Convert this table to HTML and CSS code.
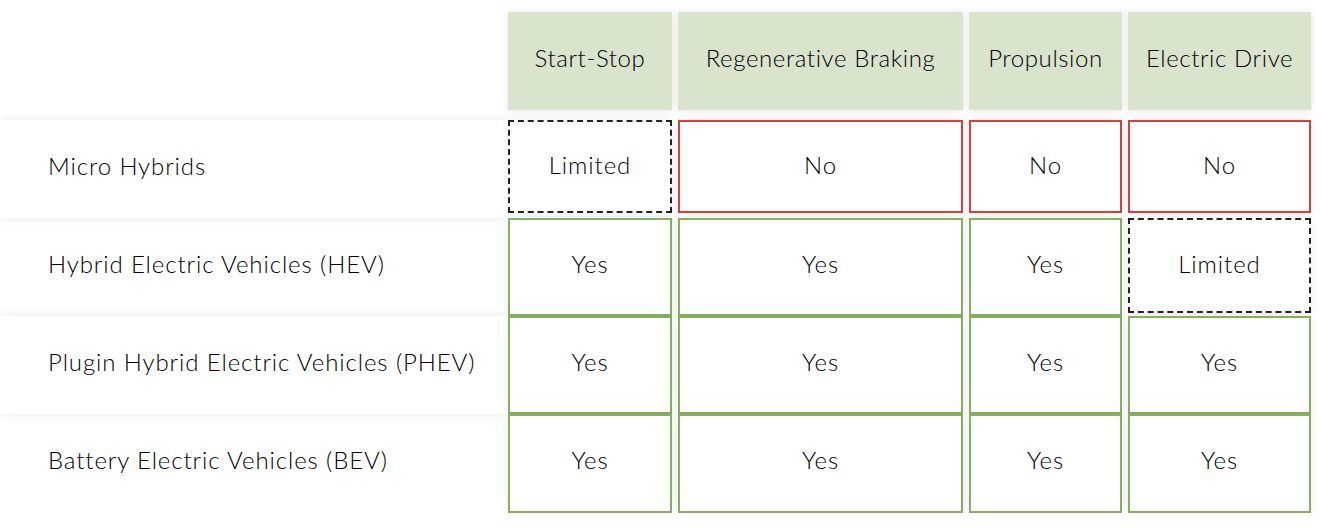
FILE: index.html
```html
<!DOCTYPE html>
<html>
<head>
<meta charset="utf-8">
<link rel="stylesheet" href="styles.css">
</head>
<body>
<div class="matrix">
  <div class="corner"></div>
  <div class="head">Start-Stop</div>
  <div class="head">Regenerative Braking</div>
  <div class="head">Propulsion</div>
  <div class="head">Electric Drive</div>

  <div class="label shaded">Micro Hybrids</div>
  <div class="cell first limited">Limited</div>
  <div class="cell first no">No</div>
  <div class="cell first no">No</div>
  <div class="cell first no">No</div>

  <div class="label">Hybrid Electric Vehicles (HEV)</div>
  <div class="cell yes">Yes</div>
  <div class="cell yes">Yes</div>
  <div class="cell yes">Yes</div>
  <div class="cell limited short">Limited</div>

  <div class="label shaded">Plugin Hybrid Electric Vehicles (PHEV)</div>
  <div class="cell yes">Yes</div>
  <div class="cell yes">Yes</div>
  <div class="cell yes">Yes</div>
  <div class="cell yes">Yes</div>

  <div class="label">Battery Electric Vehicles (BEV)</div>
  <div class="cell yes">Yes</div>
  <div class="cell yes">Yes</div>
  <div class="cell yes">Yes</div>
  <div class="cell yes">Yes</div>
</div>
</body>
</html>
```
FILE: styles.css
```css
html, body {
  margin: 0;
  padding: 0;
  background: #ffffff;
}
body {
  font-family: Lato, "Noto Sans", sans-serif;
  font-weight: 300;
  color: #000000;
  font-size: 24px;
  letter-spacing: 0.9px;
}
.matrix {
  display: grid;
  grid-template-columns: 502px 164px 285px 153px 183px;
  grid-template-rows: 108px 98px 98px 98px 99px;
  column-gap: 6px;
  row-gap: 0;
  padding-top: 12px;
}
.matrix > * {
  display: flex;
  align-items: center;
  justify-content: center;
  box-sizing: border-box;
  padding-bottom: 8px;
}
.head {
  background: #d9e4cc;
  box-shadow: 0 0 8px rgba(0, 0, 0, 0.10);
  height: 98px;
  letter-spacing: 0.6px;
}
.label {
  justify-content: flex-start;
  padding-left: 48px;
  margin-right: -6px;
}
.label.shaded {
  background: #ffffff;
  box-shadow: 0 0 10px rgba(0, 0, 0, 0.09);
}
.cell {
  background: #ffffff;
  border: 2px solid transparent;
  box-shadow: 0 0 10px rgba(0, 0, 0, 0.07);
  position: relative;
}
.cell.first {
  height: 93px;
  padding-bottom: 4px;
}
.cell.short {
  height: 95px;
  padding-bottom: 4px;
}
.cell.no {
  border-color: #d8403c;
}
.cell.yes {
  border-color: #86b05e;
}
.cell.limited {
  border: 2px dashed #222222;
}
```
